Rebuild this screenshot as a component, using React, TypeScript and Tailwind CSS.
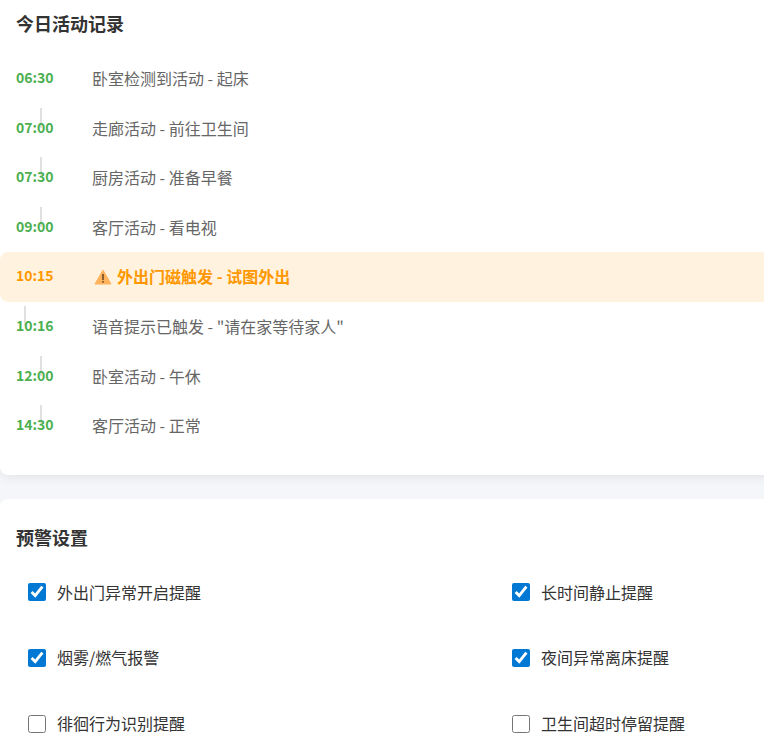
const records = [
  { time: '06:30', text: '卧室检测到活动 - 起床' },
  { time: '07:00', text: '走廊活动 - 前往卫生间' },
  { time: '07:30', text: '厨房活动 - 准备早餐' },
  { time: '09:00', text: '客厅活动 - 看电视' },
  { time: '10:15', text: '外出门磁触发 - 试图外出', warn: true },
  { time: '10:16', text: '语音提示已触发 - "请在家等待家人"' },
  { time: '12:00', text: '卧室活动 - 午休' },
  { time: '14:30', text: '客厅活动 - 正常', last: true },
]

const alerts = [
  { label: '外出门异常开启提醒', on: true },
  { label: '长时间静止提醒', on: true },
  { label: '烟雾/燃气报警', on: true },
  { label: '夜间异常离床提醒', on: true },
  { label: '徘徊行为识别提醒', on: false },
  { label: '卫生间超时停留提醒', on: false },
]

function WarnIcon() {
  return (
    <svg viewBox="0 0 18 16" className="mr-[5px] ml-0.5 inline-block h-4 w-[18px] align-[-2px]">
      <path d="M9 1 L17 15 L1 15 Z" fill="#ffb35c" stroke="#ffb35c" strokeWidth="1" strokeLinejoin="round" />
      <rect x="8.2" y="5" width="1.6" height="6" fill="#6b4a2a" />
      <rect x="8.2" y="12" width="1.6" height="1.6" fill="#6b4a2a" />
    </svg>
  )
}

export default function App() {
  return (
    <div className="h-[756px] overflow-hidden bg-[#f5f6fa] font-['Noto_Sans_CJK_SC',sans-serif] text-[16px] leading-[1.6] text-[#333]">
      <div className="w-[780px]">
        {/* Today's activity */}
        <section className="rounded-b-lg bg-white px-4 pt-[9px] pb-[24.4px] shadow-[0_2px_12px_rgba(0,0,0,0.08)]">
          <h3 className="mb-[16.2px] text-[18px] font-semibold">今日活动记录</h3>
          <div>
            {records.map((item) => (
              <div
                key={item.time}
                className={`relative flex py-3 ${item.warn ? '-mx-4 rounded-lg bg-[#fff3e0] px-4' : ''}`}
              >
                <div className={`mr-4 w-[60px] shrink-0 text-[14px] leading-[23.6px] font-semibold ${item.warn ? 'text-[#ff9800]' : 'text-[#4caf50]'}`}>
                  {item.time}
                </div>
                <div className={item.warn ? 'font-semibold text-[#ff9800]' : 'text-[#666]'}>
                  {item.warn && <WarnIcon />}
                  {item.text}
                </div>
                {!item.last && (
                  <div className="absolute top-[calc(100%+4px)] left-6 h-5 w-0.5 bg-[#e0e0e0]" />
                )}
              </div>
            ))}
          </div>
        </section>

        {/* Alert settings */}
        <section className="mt-6 rounded-lg bg-white p-4 pt-6">
          <h3 className="mb-[15.6px] text-[18px] font-semibold">预警设置</h3>
          <div className="grid grid-cols-[468px_1fr] gap-x-4 gap-y-4">
            {alerts.map((a) => (
              <label key={a.label} className="flex items-center p-3">
                <input
                  type="checkbox"
                  defaultChecked={a.on}
                  className="mr-[11px] h-[18px] w-[18px] accent-[#0078d4]"
                />
                <span>{a.label}</span>
              </label>
            ))}
          </div>
        </section>
      </div>
    </div>
  )
}
